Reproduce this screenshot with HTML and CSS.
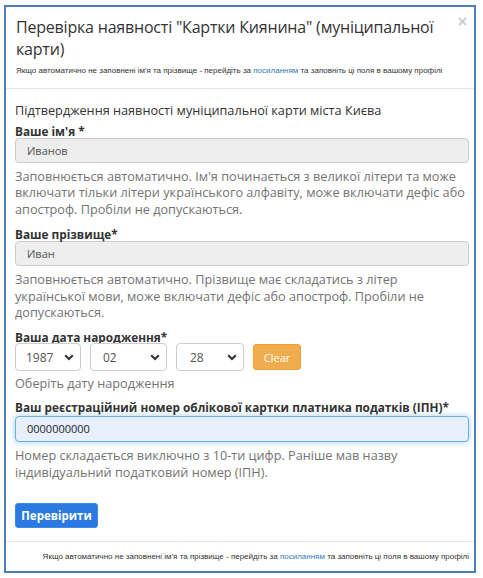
FILE: index.html
```html
<!DOCTYPE html>
<html lang="uk">
<head>
<meta charset="utf-8">
<title>Перевірка наявності "Картки Киянина"</title>
<link rel="stylesheet" href="styles.css">
</head>
<body>
<div class="frame">
  <div class="modal-header">
    <span class="close">×</span>
    <h4 class="modal-title">Перевірка наявності "Картки Киянина" (муніципальної карти)</h4>
    <p class="note">Якщо автоматично не заповнені ім'я та прізвище - перейдіть за <a href="#">посиланням</a> та заповніть ці поля в вашому профілі</p>
  </div>
  <div class="modal-body">
    <p class="intro">Підтвердження наявності муніципальної карти міста Києва</p>
    <label class="label">Ваше ім'я *</label>
    <div class="input readonly">Иванов</div>
    <p class="help">Заповнюється автоматично. Ім'я починається з великої літери та може включати тільки літери українського алфавіту, може включати дефіс або апостроф. Пробіли не допускаються.</p>
    <label class="label label-2">Ваше прізвище*</label>
    <div class="input readonly">Иван</div>
    <p class="help">Заповнюється автоматично. Прізвище має складатись з літер української мови, може включати дефіс або апостроф. Пробіли не допускаються.</p>
    <label class="label label-3">Ваша дата народження*</label>
    <div class="date-row">
      <div class="select sel-year"><span>1987</span><svg class="chev" width="10" height="7" viewBox="0 0 10 7"><path d="M1.2 1.3 L5 5.1 L8.8 1.3" fill="none" stroke="#333" stroke-width="2.1"/></svg></div>
      <div class="select sel-month"><span>02</span><svg class="chev" width="10" height="7" viewBox="0 0 10 7"><path d="M1.2 1.3 L5 5.1 L8.8 1.3" fill="none" stroke="#333" stroke-width="2.1"/></svg></div>
      <div class="select sel-day"><span>28</span><svg class="chev" width="10" height="7" viewBox="0 0 10 7"><path d="M1.2 1.3 L5 5.1 L8.8 1.3" fill="none" stroke="#333" stroke-width="2.1"/></svg></div>
      <button class="btn-clear" type="button">Clear</button>
    </div>
    <p class="help help-date">Оберіть дату народження</p>
    <label class="label label-4">Ваш реєстраційний номер облікової картки платника податків (ІПН)*</label>
    <div class="input focused">0000000000</div>
    <p class="help help-4">Номер складається виключно з 10-ти цифр. Раніше мав назву індивідуальний податковий номер (ІПН).</p>
    <button class="btn-primary" type="button">Перевірити</button>
  </div>
  <div class="modal-footer">
    <p class="note">Якщо автоматично не заповнені ім'я та прізвище - перейдіть за <a href="#">посиланням</a> та заповніть ці поля в вашому профілі</p>
  </div>
</div>
</body>
</html>
```

FILE: styles.css
```css
* { box-sizing: border-box; }
html, body { margin: 0; padding: 0; background: #fff; }
body {
  font-family: "Open Sans", "Noto Sans", sans-serif;
  font-size: 12.7px;
  color: #333;
}
.frame {
  margin: 5px 0 0 4px;
  width: 472px;
  height: 568px;
  border: 2px solid #4a7ebb;
  background: #fff;
  display: flex;
  flex-direction: column;
}
.modal-header {
  position: relative;
  padding: 9px 22px 12px 10px;
  border-bottom: 1px solid #e5e5e5;
}
.close {
  position: absolute;
  top: 7px;
  right: 7px;
  font-size: 16px;
  font-weight: bold;
  line-height: 16px;
  color: #000;
  opacity: 0.2;
  font-family: "Liberation Sans", Arial, sans-serif;
}
.modal-title {
  margin: 0;
  font-size: 16px;
  letter-spacing: -0.2px;
  line-height: 22px;
  font-weight: normal;
  color: #333;
}
.note {
  margin: 6px 0 0;
  font-family: "Liberation Sans", Arial, sans-serif;
  font-size: 8px;
  line-height: 10px;
  color: #333;
}
.note a { color: #337ab7; text-decoration: none; }
.modal-body {
  padding: 13px 5px 13px 9px;
  border-bottom: 1px solid #e5e5e5;
}
.intro { margin: 0 0 6.5px; line-height: 16px; }
.label {
  display: block;
  font-size: 11.8px;
  font-weight: bold;
  line-height: 13px;
}
.label-2 { margin-top: 11px; }
.label-3 { margin-top: 10.5px; }
.label-4 { margin-top: 9.7px; }
.input {
  height: 25px;
  border: 1px solid #ccc;
  border-radius: 4px;
  padding: 0 11px;
  font-size: 11px;
  line-height: 23px;
  color: #555;
}
.readonly { background: #eee; }
.focused {
  height: 26px;
  line-height: 24px;
  margin-top: 2px;
  background: #e8f0fe;
  border-color: #66afe9;
  box-shadow: 0 0 6px rgba(102, 175, 233, 0.6);
  color: #222;
}
.help {
  margin: 5px 0 0;
  line-height: 16.5px;
  color: #737373;
}
.help-date { margin-top: 3.5px; }
.help-4 { margin-top: 5.5px; }
.date-row {
  display: flex;
  gap: 9px;
  margin-top: -1px;
  align-items: flex-start;
}
.select {
  height: 28px;
  border: 1px solid #ccc;
  border-radius: 4px;
  background: #fff;
  display: flex;
  align-items: center;
  justify-content: space-between;
  padding: 0 6px 0 10px;
  color: #555;
  font-size: 12px;
}
.sel-year { width: 66px; }
.sel-month { width: 77px; padding-left: 12px; }
.sel-day { width: 68px; padding-left: 13px; }
.chev { display: block; }
.btn-clear {
  width: 48px;
  height: 26px;
  margin-top: 1px;
  border: 1px solid #eea236;
  border-radius: 3px;
  background: #f0ad4e;
  color: #fff;
  font-family: inherit;
  font-size: 11px;
  padding: 0;
}
.btn-primary {
  display: block;
  margin-top: 22.5px;
  width: 83px;
  height: 25px;
  border: 1px solid #3b8ae6;
  border-radius: 3px;
  background: #2a7ae2;
  color: #fff;
  font-family: inherit;
  font-size: 11.5px;
  font-weight: bold;
  padding: 0;
}
.modal-footer {
  padding: 10px 5px 0 0;
  text-align: right;
}
.modal-footer .note { margin: 0; }
```
